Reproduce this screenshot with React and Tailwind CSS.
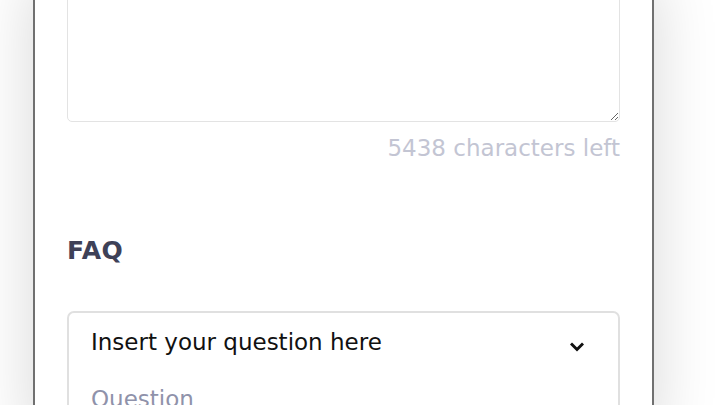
import React from 'react'

const ChevronDown = () => (
    <svg width="14" height="10" viewBox="0 0 14 10" className="shrink-0">
        <path d="M2 2.5 L7 7.5 L12 2.5" fill="none" stroke="#111" strokeWidth="3" strokeLinecap="square" />
    </svg>
)

const App = () => {
    return (
        <div className="h-[405px] w-[720px] overflow-hidden bg-white" style={{ fontFamily: '"DejaVu Sans", "Noto Sans", sans-serif' }}>
            <div className="ml-[33px] w-[621px] h-[460px] -mt-[20px] bg-white border-x-2 border-[#707070] shadow-[0_0_60px_rgba(0,0,0,0.16)] px-[32px]">
                <textarea
                    className="block w-full h-[142px] rounded-[5px] border border-[#e3e3e3] resize-y outline-none"
                    defaultValue=""
                />
                <p className="text-right text-[23px] leading-none text-[#c3c5d3] mt-[15px]">5438 characters left</p>

                <h2 className="mt-[78px] text-[25px] leading-none font-bold text-[#3e4157] tracking-[0.5px]">FAQ</h2>

                <div className="mt-[48px] rounded-[7px] border-2 border-[#e0e0e0] px-[22px] pt-[14px]">
                    <div className="flex items-start justify-between">
                        <span className="text-[23px] leading-[30px] text-[#111]">Insert your question here</span>
                        <span className="mr-[12px] mt-[15px]"><ChevronDown /></span>
                    </div>
                    <p className="mt-[27px] text-[23px] leading-[30px] text-[#8f92aa]">Question</p>
                </div>
            </div>
        </div>
    )
}

export default App
